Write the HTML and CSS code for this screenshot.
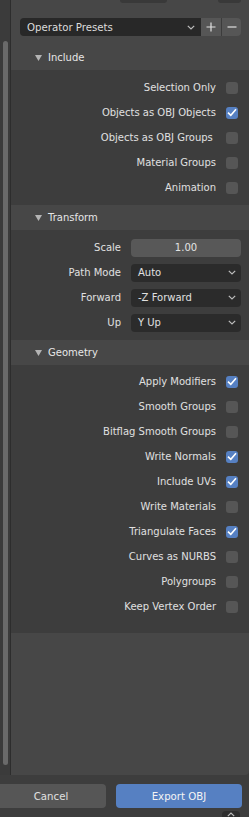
FILE: index.html
```html
<!DOCTYPE html>
<html>
<head>
<meta charset="utf-8">
<link rel="stylesheet" href="styles.css">
</head>
<body>
<div class="app">
  <div class="main">
    <div class="gutter"><div class="thumb"></div></div>
    <div class="region">
      <div class="topstrip"><span class="tab t1"></span><span class="tab t2"></span></div>
      <div class="presets">
        <div class="pdrop"><span>Operator Presets</span>
          <svg class="chev" width="8" height="5" viewBox="0 0 8 5"><polyline points="0.8,0.8 4,4 7.2,0.8" fill="none" stroke="#bdbdbd" stroke-width="1.2"/></svg>
        </div>
        <div class="pbtn plus"><svg width="10" height="10" viewBox="0 0 10 10"><path d="M5 0.5V9.5M0.5 5H9.5" stroke="#e0e0e0" stroke-width="1.2"/></svg></div>
        <div class="pbtn minus"><svg width="10" height="10" viewBox="0 0 10 10"><path d="M0.5 5H9.5" stroke="#e0e0e0" stroke-width="1.2"/></svg></div>
      </div>

      <section class="panel p-include">
        <div class="phead"><svg class="tri" width="7" height="6" viewBox="0 0 7 6"><polygon points="0,0 7,0 3.5,6" fill="#b4b4b4"/></svg><span>Include</span></div>
        <div class="pbody">
          <div class="crow"><span class="lbl">Selection Only</span><span class="cb"></span></div>
          <div class="crow"><span class="lbl">Objects as OBJ Objects</span><span class="cb on"><svg width="10" height="9" viewBox="0 0 10 9"><polyline points="1,4.6 3.8,7.3 9,1.3" fill="none" stroke="#fff" stroke-width="1.6"/></svg></span></div>
          <div class="crow"><span class="lbl">Objects as OBJ Groups&nbsp;</span><span class="cb"></span></div>
          <div class="crow"><span class="lbl">Material Groups</span><span class="cb"></span></div>
          <div class="crow"><span class="lbl">Animation</span><span class="cb"></span></div>
        </div>
      </section>

      <section class="panel p-transform">
        <div class="phead"><svg class="tri" width="7" height="6" viewBox="0 0 7 6"><polygon points="0,0 7,0 3.5,6" fill="#b4b4b4"/></svg><span>Transform</span></div>
        <div class="pbody">
          <div class="frow"><span class="flbl">Scale</span><div class="num">1.00</div></div>
          <div class="frow"><span class="flbl">Path Mode</span><div class="drop"><span>Auto</span><svg class="chev" width="8" height="5" viewBox="0 0 8 5"><polyline points="0.8,0.8 4,4 7.2,0.8" fill="none" stroke="#bdbdbd" stroke-width="1.2"/></svg></div></div>
          <div class="frow"><span class="flbl">Forward</span><div class="drop"><span>-Z Forward</span><svg class="chev" width="8" height="5" viewBox="0 0 8 5"><polyline points="0.8,0.8 4,4 7.2,0.8" fill="none" stroke="#bdbdbd" stroke-width="1.2"/></svg></div></div>
          <div class="frow"><span class="flbl">Up</span><div class="drop"><span>Y Up</span><svg class="chev" width="8" height="5" viewBox="0 0 8 5"><polyline points="0.8,0.8 4,4 7.2,0.8" fill="none" stroke="#bdbdbd" stroke-width="1.2"/></svg></div></div>
        </div>
      </section>

      <section class="panel p-geometry">
        <div class="phead"><svg class="tri" width="7" height="6" viewBox="0 0 7 6"><polygon points="0,0 7,0 3.5,6" fill="#b4b4b4"/></svg><span>Geometry</span></div>
        <div class="pbody">
          <div class="crow"><span class="lbl">Apply Modifiers</span><span class="cb on"><svg width="10" height="9" viewBox="0 0 10 9"><polyline points="1,4.6 3.8,7.3 9,1.3" fill="none" stroke="#fff" stroke-width="1.6"/></svg></span></div>
          <div class="crow"><span class="lbl">Smooth Groups</span><span class="cb"></span></div>
          <div class="crow"><span class="lbl">Bitflag Smooth Groups</span><span class="cb"></span></div>
          <div class="crow"><span class="lbl">Write Normals</span><span class="cb on"><svg width="10" height="9" viewBox="0 0 10 9"><polyline points="1,4.6 3.8,7.3 9,1.3" fill="none" stroke="#fff" stroke-width="1.6"/></svg></span></div>
          <div class="crow"><span class="lbl">Include UVs</span><span class="cb on"><svg width="10" height="9" viewBox="0 0 10 9"><polyline points="1,4.6 3.8,7.3 9,1.3" fill="none" stroke="#fff" stroke-width="1.6"/></svg></span></div>
          <div class="crow"><span class="lbl">Write Materials</span><span class="cb"></span></div>
          <div class="crow"><span class="lbl">Triangulate Faces</span><span class="cb on"><svg width="10" height="9" viewBox="0 0 10 9"><polyline points="1,4.6 3.8,7.3 9,1.3" fill="none" stroke="#fff" stroke-width="1.6"/></svg></span></div>
          <div class="crow"><span class="lbl">Curves as NURBS</span><span class="cb"></span></div>
          <div class="crow"><span class="lbl">Polygroups</span><span class="cb"></span></div>
          <div class="crow"><span class="lbl">Keep Vertex Order</span><span class="cb"></span></div>
        </div>
      </section>
    </div>
  </div>
  <div class="bottom">
    <div class="btn cancel">Cancel</div>
    <div class="btn export">Export OBJ</div>
    <div class="cornertab"><svg width="8" height="5" viewBox="0 0 8 5"><polyline points="0.8,4.2 4,1 7.2,4.2" fill="none" stroke="#bdbdbd" stroke-width="1.2"/></svg></div>
  </div>
</div>
</body>
</html>
```

FILE: styles.css
```css
html, body {
  margin: 0;
  padding: 0;
}
body {
  width: 249px;
  height: 817px;
  overflow: hidden;
  background: #3d3d3d;
  font-family: "DejaVu Sans", "Liberation Sans", sans-serif;
  font-size: 10px;
  color: #e0e0e0;
}
.app {
  position: relative;
  display: grid;
  grid-template-rows: 775px 42px;
  width: 249px;
  height: 817px;
}
.main {
  display: flex;
  min-height: 0;
}
.gutter {
  width: 10px;
  background: #3b3b3b;
  border-right: 1px solid #2d2d2d;
  padding-top: 41px;
  box-sizing: content-box;
}
.thumb {
  width: 5px;
  height: 724px;
  margin-left: 3px;
  border-radius: 3px;
  background: #6a6a6a;
}
.region {
  flex: 1;
  background: #474747;
  display: flex;
  flex-direction: column;
  border-bottom-right-radius: 4px;
}
.topstrip {
  height: 3px;
  display: flex;
}
.tab {
  height: 3px;
  background: #393939;
  border-radius: 0 0 4px 4px;
}
.t1 { margin-left: 109px; width: 47px; }
.t2 { margin-left: 51px; width: 23px; }

.presets {
  display: flex;
  height: 18px;
  margin: 15px 8px 0 9px;
}
.pdrop {
  flex: 1;
  background: #282828;
  border-radius: 4px 0 0 4px;
  display: flex;
  align-items: center;
  padding: 0 6px 0 7px;
  color: #dcdcdc;
  font-size: 10.2px;
}
.pdrop span { flex: 1; }
.pbtn {
  width: 20px;
  background: #565656;
  display: flex;
  align-items: center;
  justify-content: center;
}
.minus {
  border-left: 1px solid #3c3c3c;
  width: 19px;
  border-radius: 0 4px 4px 0;
}

.panel {
  display: flex;
  flex-direction: column;
}
.p-include { margin-top: 9px; }
.phead {
  height: 25px;
  display: flex;
  align-items: center;
  padding-left: 34px;
  gap: 6px;
  background: #474747;
  color: #e6e6e6;
  padding-left: 24px;
}
.tri { margin-top: 1px; }
.pbody {
  background: #3d3d3d;
  padding-top: 5px;
  padding-bottom: 5px;
}
.p-transform .pbody { padding-bottom: 5px; }
.p-geometry .pbody { padding-top: 4px; padding-bottom: 14px; }

.crow {
  height: 25px;
  display: flex;
  justify-content: flex-end;
  align-items: center;
  gap: 10px;
  padding-right: 11px;
}
.lbl { white-space: pre; }
.cb {
  width: 12px;
  height: 12px;
  border-radius: 3px;
  background: #565656;
  display: flex;
  align-items: center;
  justify-content: center;
}
.cb.on { background: #5680c2; }

.frow {
  height: 25px;
  display: grid;
  grid-template-columns: 1fr 110px;
  column-gap: 10px;
  align-items: center;
  padding-right: 8px;
}
.flbl { text-align: right; }
.num {
  height: 18px;
  border-radius: 4px;
  background: #585858;
  display: flex;
  align-items: center;
  justify-content: center;
  color: #e4e4e4;
}
.drop {
  height: 18px;
  border-radius: 4px;
  background: #2b2b2b;
  display: flex;
  align-items: center;
  padding: 0 5px 0 7px;
}
.drop span { flex: 1; }

.bottom {
  display: flex;
  align-items: flex-start;
  gap: 10px;
  padding-top: 9px;
  background: #3d3d3d;
}
.btn {
  height: 24px;
  border-radius: 4px;
  display: flex;
  align-items: center;
  justify-content: center;
  font-size: 10.2px;
}
.cancel {
  width: 110px;
  margin-left: -4px;
  background: #565656;
  color: #e0e0e0;
}
.export {
  width: 126px;
  background: #5680c2;
  color: #f4f4f4;
}
.cornertab {
  position: absolute;
  left: 222px;
  top: 811px;
  width: 18px;
  height: 8px;
  border-radius: 4px 4px 0 0;
  background: #2e2e2e;
  display: flex;
  justify-content: center;
  padding-top: 1px;
  box-sizing: border-box;
}
```
